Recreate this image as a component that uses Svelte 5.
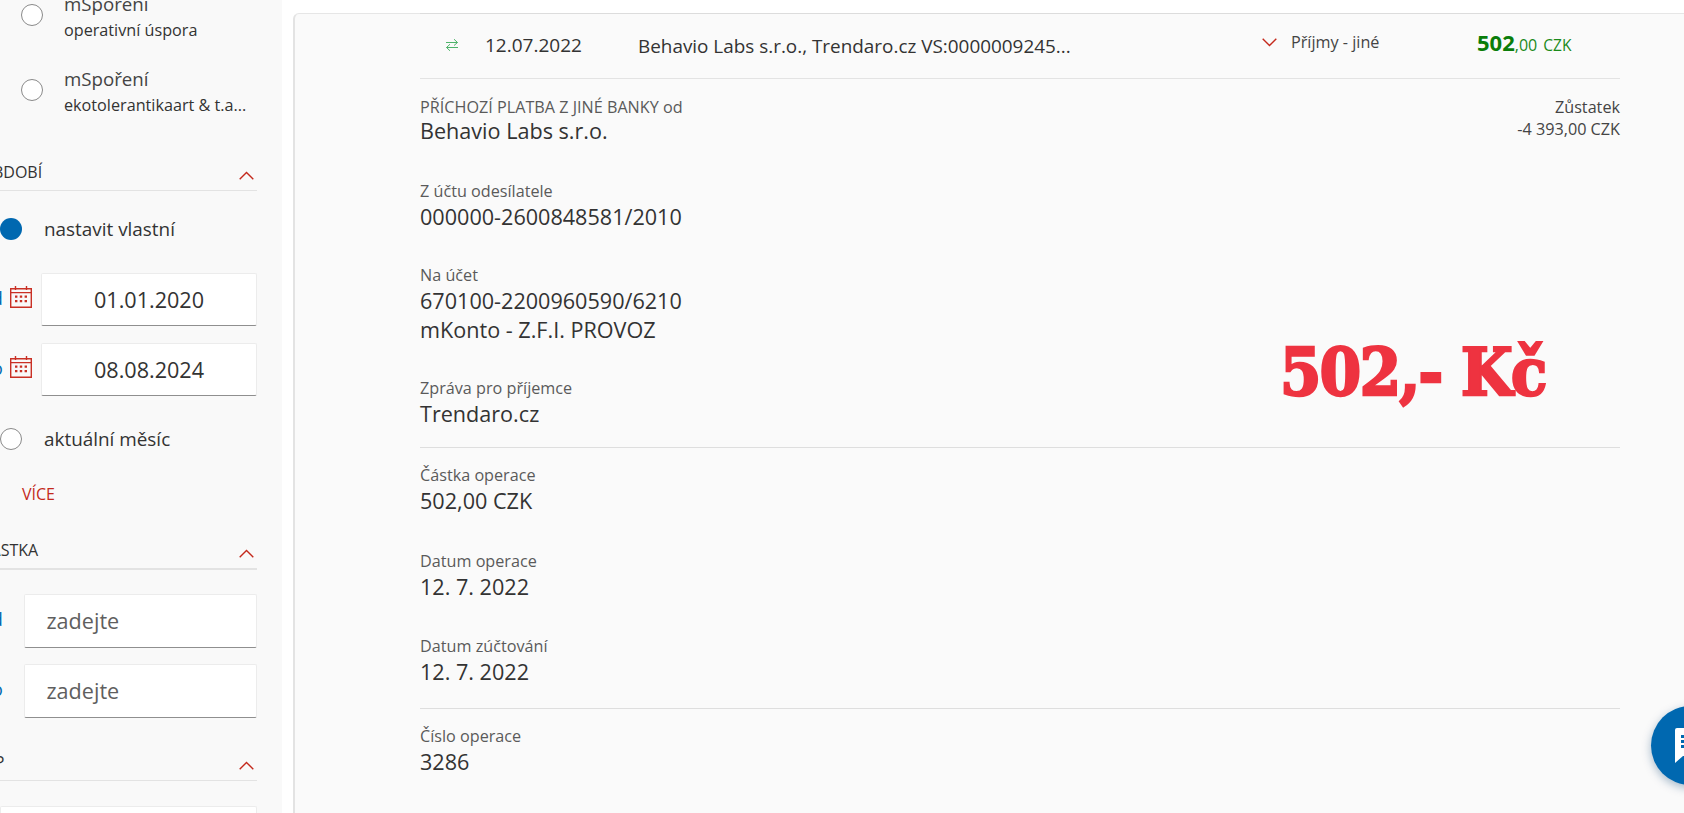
<script>
	const sections = [
		{
			divider: false,
			tall: false,
			fields: [
				{ label: 'Z účtu odesílatele', lines: ['000000-2600848581/2010'] },
				{ label: 'Na účet', lines: ['670100-2200960590/6210', 'mKonto - Z.F.I. PROVOZ'] },
				{ label: 'Zpráva pro příjemce', lines: ['Trendaro.cz'] }
			]
		},
		{
			divider: true,
			tall: true,
			fields: [
				{ label: 'Částka operace', lines: ['502,00 CZK'] },
				{ label: 'Datum operace', lines: ['12. 7. 2022'] },
				{ label: 'Datum zúčtování', lines: ['12. 7. 2022'] }
			]
		},
		{
			divider: true,
			tall: false,
			fields: [{ label: 'Číslo operace', lines: ['3286'] }]
		}
	];
</script>

<div class="page">
	<aside class="sidebar">
		<div class="accounts">
			<div class="account">
				<span class="radio"></span>
				<div class="account-text">
					<div class="account-name">mSpoření</div>
					<div class="account-sub">operativní úspora</div>
				</div>
			</div>
			<div class="account">
				<span class="radio"></span>
				<div class="account-text">
					<div class="account-name">mSpoření</div>
					<div class="account-sub">ekotolerantikaart &amp; t.a...</div>
				</div>
			</div>
		</div>

		<div class="filter-head first">
			<span class="cut-obdobi">OBDOBÍ</span>
			<svg class="chev" viewBox="0 0 15 9"><path d="M.7 8.3 7.5 1.5l6.8 6.8" /></svg>
		</div>
		<div class="option">
			<span class="radio on"></span>
			<span>nastavit vlastní</span>
		</div>
		<div class="date-row">
			<span class="stub">od</span>
			<svg class="cal" viewBox="0 0 22 22">
				<path class="cal-line" d="M.7 2.7h20.6v18.6H.7zM.7 6.6h20.6M5.5 0v4M16.5 0v4" />
				<path class="cal-dots" d="M5 9.5h2.4v2.2H5zM9.8 9.5h2.4v2.2H9.8zM14.6 9.5H17v2.2h-2.4zM5 14h2.4v2.2H5zM9.8 14h2.4v2.2H9.8zM14.6 14H17v2.2h-2.4z" />
			</svg>
			<div class="input date">01.01.2020</div>
		</div>
		<div class="date-row second">
			<span class="stub">do</span>
			<svg class="cal" viewBox="0 0 22 22">
				<path class="cal-line" d="M.7 2.7h20.6v18.6H.7zM.7 6.6h20.6M5.5 0v4M16.5 0v4" />
				<path class="cal-dots" d="M5 9.5h2.4v2.2H5zM9.8 9.5h2.4v2.2H9.8zM14.6 9.5H17v2.2h-2.4zM5 14h2.4v2.2H5zM9.8 14h2.4v2.2H9.8zM14.6 14H17v2.2h-2.4z" />
			</svg>
			<div class="input date">08.08.2024</div>
		</div>
		<div class="option month">
			<span class="radio"></span>
			<span>aktuální měsíc</span>
		</div>
		<div class="more">VÍCE</div>

		<div class="filter-head amount">
			<span class="cut-castka">ČÁSTKA</span>
			<svg class="chev" viewBox="0 0 15 9"><path d="M.7 8.3 7.5 1.5l6.8 6.8" /></svg>
		</div>
		<div class="amount-row">
			<span class="stub">od</span>
			<div class="input placeholder">zadejte</div>
		</div>
		<div class="amount-row second-amount">
			<span class="stub">do</span>
			<div class="input placeholder">zadejte</div>
		</div>

		<div class="filter-head type">
			<span class="cut-typ">TYP</span>
			<svg class="chev" viewBox="0 0 15 9"><path d="M.7 8.3 7.5 1.5l6.8 6.8" /></svg>
		</div>
		<div class="input last"></div>
	</aside>

	<main class="main">
		<div class="card">
			<div class="content">
				<div class="tx-row">
					<svg class="swap" viewBox="0 0 14 14">
						<path d="M1 4.5h11.5M9 1.2l3.5 3.3-3.5 3M13 9.5H1.5M5 6.2 1.5 9.5 5 12.8" />
					</svg>
					<span class="tx-date">12.07.2022</span>
					<span class="tx-desc">Behavio Labs s.r.o., Trendaro.cz VS:0000009245...</span>
					<svg class="chev down" viewBox="0 0 15 9"><path d="M.7.7 7.5 7.5l6.8-6.8" /></svg>
					<span class="tx-cat">Příjmy - jiné</span>
					<span class="tx-amount"><b>502</b>,00 <span class="cur">CZK</span></span>
				</div>

				<div class="detail-head">
					<div>
						<div class="label">PŘÍCHOZÍ PLATBA Z JINÉ BANKY od</div>
						<div class="value">Behavio Labs s.r.o.</div>
					</div>
					<div class="balance">
						<div>Zůstatek</div>
						<div>-4 393,00 CZK</div>
					</div>
				</div>

				{#each sections as section}
					<section class="section" class:divider={section.divider} class:tall={section.tall}>
						{#each section.fields as field}
							<div class="field">
								<div class="label">{field.label}</div>
								{#each field.lines as line}
									<div class="value">{line}</div>
								{/each}
							</div>
						{/each}
					</section>
				{/each}

				<div class="stamp">502,- Kč</div>
			</div>
		</div>
	</main>

	<div class="chat">
		<svg viewBox="0 0 34 36">
			<path class="bubble" d="M3 0h31v28H9l-8 7V2a2 2 0 0 1 2-2z" />
			<path class="bubble-lines" d="M7 7h27v3H7zM7 12h27v3H7zM7 17h27v3H7z" />
		</svg>
	</div>
</div>

<style>
	:global(body) {
		margin: 0;
		background: #fff;
	}

	.page {
		position: relative;
		display: flex;
		width: 1684px;
		height: 813px;
		overflow: hidden;
		background: #fff;
		color: #333;
		font-family: 'Open Sans', 'Noto Sans', sans-serif;
	}

	.sidebar {
		flex: 0 0 282px;
		box-sizing: border-box;
		height: 813px;
		padding-right: 25px;
		overflow: hidden;
		background: #f9f9f9;
	}

	.accounts {
		margin-top: -23px;
		padding-left: 21px;
	}

	.account {
		display: flex;
		align-items: center;
		gap: 21px;
		height: 75px;
	}

	.account-text {
		margin-top: 4px;
	}

	.radio {
		flex: none;
		box-sizing: border-box;
		width: 22px;
		height: 22px;
		border: 1px solid #8a8a8a;
		border-radius: 50%;
		background: #fff;
	}

	.radio.on {
		border: none;
		background: #0068b0;
	}

	.account-name {
		font-size: 18.7px;
		line-height: 25px;
		color: #444;
	}

	.account-sub {
		margin-top: 2px;
		font-size: 16.2px;
		line-height: 25px;
	}

	.filter-head {
		display: flex;
		align-items: flex-end;
		justify-content: space-between;
		box-sizing: border-box;
		height: 26px;
		padding: 0 3px 8px 0;
		border-bottom: 1px solid #e3e3e3;
		font-size: 16px;
		line-height: 20px;
	}

	.filter-head.first {
		margin-top: 38px;
	}

	.filter-head.amount {
		height: 27px;
		margin-top: 38px;
		border-bottom-width: 2px;
	}

	.filter-head.type {
		margin-top: 37px;
	}

	.cut-obdobi {
		margin-left: -19.5px;
	}

	.cut-castka {
		margin-left: -19.5px;
	}

	.cut-typ {
		margin-left: -23px;
	}

	.chev {
		flex: none;
		width: 15px;
		height: 9px;
	}

	.filter-head .chev {
		margin-bottom: 2px;
	}

	.chev path {
		fill: none;
		stroke: #c4291c;
		stroke-width: 1.4;
	}

	.option {
		display: flex;
		align-items: center;
		gap: 22px;
		height: 22px;
		margin-top: 27px;
		font-size: 18.9px;
	}

	.option.month {
		margin-top: 32px;
	}

	.date-row,
	.amount-row {
		display: flex;
		align-items: flex-start;
		margin-top: 33px;
	}

	.date-row.second {
		margin-top: 17px;
	}

	.amount-row {
		margin-top: 24px;
	}

	.amount-row.second-amount {
		margin-top: 16px;
	}

	.stub {
		flex: none;
		width: 10px;
		margin-top: 13px;
		margin-left: -19px;
		font-size: 18px;
		line-height: 24px;
		white-space: nowrap;
		color: #0068b0;
	}

	.date-row .stub {
		margin-right: 19px;
	}

	.amount-row .stub {
		margin-right: 32.5px;
	}

	.cal {
		flex: none;
		width: 22px;
		height: 22px;
		margin-top: 13px;
		margin-right: 9px;
	}

	.cal-line {
		fill: none;
		stroke: #c93025;
		stroke-width: 1.4;
	}

	.cal-dots {
		fill: #c93025;
	}

	.input {
		flex: 1;
		box-sizing: border-box;
		height: 53px;
		border: 1px solid #ececec;
		border-bottom: 1px solid #8f8f8f;
		border-radius: 2px;
		background: #fff;
		font-size: 21.6px;
		line-height: 51px;
	}

	.amount-row .input {
		height: 54px;
	}

	.input.date {
		text-align: center;
	}

	.input.placeholder {
		padding-left: 22px;
		color: #5f5f5f;
	}

	.input.last {
		height: 60px;
		margin-top: 25px;
	}

	.more {
		margin: 33px 0 0 22px;
		font-size: 16px;
		line-height: 22px;
		color: #c4291c;
	}

	.main {
		flex: 1;
		box-sizing: border-box;
		height: 813px;
		padding: 13px 0 0 11px;
	}

	.card {
		box-sizing: border-box;
		height: 100%;
		padding-left: 125px;
		border-top: 1px solid #e6e6e6;
		border-left: 2px solid #e3e3e3;
		border-top-left-radius: 6px;
		background: #fafafa;
	}

	.content {
		position: relative;
		width: 1200px;
	}

	.tx-row {
		display: flex;
		align-items: center;
		height: 64px;
		border-bottom: 1px solid #e3e3e3;
		box-shadow: 0 -1px 0 #dcdcdc;
	}

	.swap {
		flex: none;
		width: 14px;
		height: 14px;
		margin: -2px 26px 0 25px;
	}

	.swap path {
		fill: none;
		stroke: #4fb36b;
		stroke-width: 1;
	}

	.tx-date {
		width: 153px;
		flex: none;
		margin-top: -3px;
		font-size: 19px;
	}

	.tx-desc {
		width: 624px;
		flex: none;
		font-size: 18.9px;
		white-space: nowrap;
	}

	.chev.down {
		margin-right: 14px;
		margin-top: -8px;
	}

	.tx-cat {
		width: 186px;
		flex: none;
		margin-top: -8px;
		font-size: 16.2px;
		color: #444;
	}

	.tx-amount {
		margin-top: -8px;
		font-size: 16px;
		color: #1a8a1a;
		white-space: nowrap;
	}

	.tx-amount b {
		font-size: 22px;
		color: #0a7d0a;
	}

	.cur {
		margin-left: 2px;
		font-size: 15.5px;
	}

	.detail-head {
		display: flex;
		justify-content: space-between;
		align-items: flex-start;
		padding-top: 17px;
	}

	.detail-head .value {
		margin-top: -2px;
	}

	.label {
		font-size: 16.2px;
		line-height: 22px;
		color: #5a5a5a;
	}

	.value {
		font-size: 21.6px;
		line-height: 29.5px;
		color: #333;
	}

	.balance {
		margin-top: 1px;
		font-size: 16.2px;
		line-height: 21.5px;
		text-align: right;
		color: #444;
	}

	.section {
		padding-top: 34px;
	}

	.section.divider {
		margin-top: 18.5px;
		padding-top: 16px;
		border-top: 1px solid #dedede;
	}

	.section.tall {
		padding-bottom: 3px;
	}

	.field + .field {
		margin-top: 32.5px;
	}

	.section.tall .field + .field {
		margin-top: 34px;
	}

	.stamp {
		position: absolute;
		top: 318px;
		left: 860px;
		font-family: 'DejaVu Serif Condensed', 'DejaVu Serif', serif;
		font-size: 66px;
		font-weight: 700;
		font-stretch: condensed;
		letter-spacing: -1.5px;
		line-height: 80px;
		color: #ee3340;
		-webkit-text-stroke: 2.5px #ee3340;
		white-space: nowrap;
	}

	.chat {
		position: absolute;
		top: 706px;
		left: 1651px;
		display: flex;
		align-items: center;
		box-sizing: border-box;
		width: 79px;
		height: 79px;
		padding-left: 23px;
		border-radius: 50%;
		background: #0068b0;
		box-shadow: 0 3px 10px rgba(0, 60, 110, 0.35);
	}

	.chat svg {
		flex: none;
		width: 34px;
		height: 36px;
	}

	.bubble {
		fill: #fff;
	}

	.bubble-lines {
		fill: #0068b0;
	}
</style>
